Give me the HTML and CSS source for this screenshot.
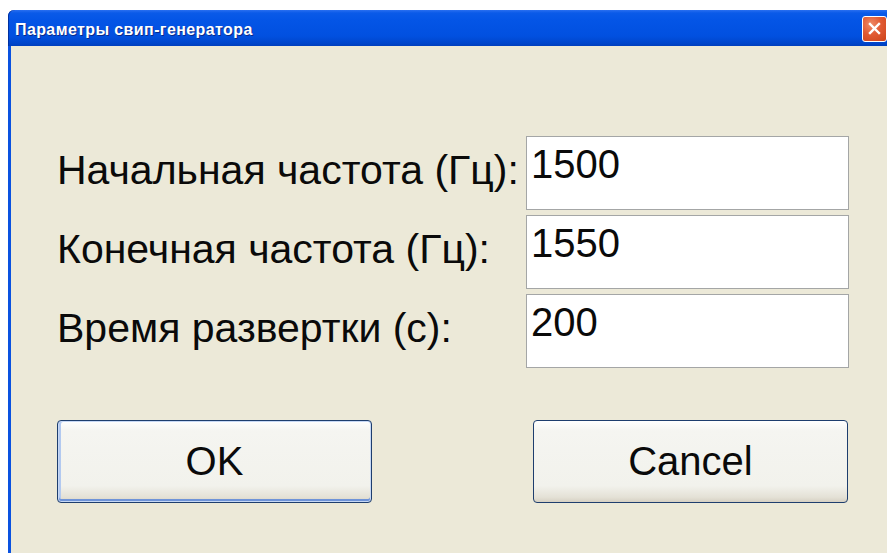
FILE: index.html
```html
<!DOCTYPE html>
<html lang="ru">
<head>
<meta charset="utf-8">
<title>Параметры свип-генератора</title>
<link rel="stylesheet" href="styles.css">
</head>
<body>
<div class="window">
  <div class="titlebar">
    <span class="title">Параметры свип-генератора</span>
    <button class="close" type="button" aria-label="Закрыть">
      <svg viewBox="0 0 21 21" width="21" height="21" aria-hidden="true">
        <path d="M6 6 L15 15 M15 6 L6 15" stroke="#fff" stroke-width="2.4" stroke-linecap="square" fill="none"/>
      </svg>
    </button>
  </div>
  <div class="content">
    <div class="form">
      <label class="label" for="f-start">Начальная частота (Гц):</label>
      <input class="field" id="f-start" type="text" value="1500">
      <label class="label" for="f-end">Конечная частота (Гц):</label>
      <input class="field" id="f-end" type="text" value="1550">
      <label class="label" for="f-time">Время развертки (с):</label>
      <input class="field" id="f-time" type="text" value="200">
    </div>
    <div class="buttons">
      <button class="btn btn-default" type="button">OK</button>
      <button class="btn" type="button">Cancel</button>
    </div>
  </div>
</div>
</body>
</html>
```

FILE: styles.css
```css
html, body {
  margin: 0;
  padding: 0;
  height: 100%;
  overflow: hidden;
  background: #ffffff;
}

.window {
  margin: 10px 0 0 8px;
  width: 885px;
  height: calc(100% - 10px);
  display: flex;
  flex-direction: column;
}

/* Blue Luna caption bar */
.titlebar {
  height: 36px;
  flex: none;
  display: flex;
  align-items: center;
  justify-content: space-between;
  padding: 0 6px 0 7px;
  border-top-left-radius: 6px;
  background: linear-gradient(to bottom,
    #2a6ff0 0px, #0a5ae8 3px, #0455e6 10px, #0150e0 26px, #0046cc 33px, #003fbd 36px);
  box-shadow: inset 1px 0 0 #0030a0;
}

.title {
  font-family: "Liberation Sans", Arial, sans-serif;
  font-weight: bold;
  font-size: 16px;
  color: #ffffff;
  padding-top: 4px;
  letter-spacing: 0.4px;
  text-shadow: 1px 1px 0 #0a2a8a;
}

.close {
  width: 25px;
  height: 26px;
  padding: 0;
  margin-top: 1px;
  border: 1px solid #ffffff;
  border-radius: 3px;
  background: radial-gradient(circle at 35% 30%, #ee8b68 0%, #e15a33 45%, #cc4218 100%);
  display: flex;
  align-items: center;
  justify-content: center;
}

/* Dialog body */
.content {
  flex: 1;
  background: #ece9d8;
  border-left: 3px solid #0a52e0;
  padding: 90px 0 0 46px;
}

.form {
  display: grid;
  grid-template-columns: 469px 323px;
  grid-auto-rows: 74px;
  row-gap: 5px;
}

.label {
  font-family: "Liberation Sans", Arial, sans-serif;
  font-size: 41px;
  line-height: 46px;
  color: #0a0a0a;
  padding-top: 11px;
  white-space: nowrap;
}

.field {
  box-sizing: border-box;
  width: 323px;
  height: 74px;
  margin: 0;
  padding: 4px 4px 22px 4px;
  border: 1px solid #a4a6a6;
  background: #ffffff;
  font-family: "Liberation Sans", Arial, sans-serif;
  font-size: 40px;
  line-height: 46px;
  color: #0a0a0a;
  outline: none;
}

.buttons {
  display: flex;
  justify-content: space-between;
  width: 791px;
  margin-top: 52px;
}

.btn {
  width: 315px;
  height: 83px;
  border: 1px solid #1e3e6e;
  border-radius: 4px;
  background: linear-gradient(to bottom, #ffffff 0%, #f5f5f1 12%, #f2f2ec 80%, #e4e1d6 94%, #d6d0c3 100%);
  font-family: "Liberation Sans", Arial, sans-serif;
  font-size: 40px;
  color: #0a0a0a;
  padding: 0;
}

.btn-default {
  box-shadow: inset 0 0 0 1px #c6d8f5, inset 0 -2px 0 1px #6e93d8, inset 2px 0 0 1px #b2c9f0;
}
```
